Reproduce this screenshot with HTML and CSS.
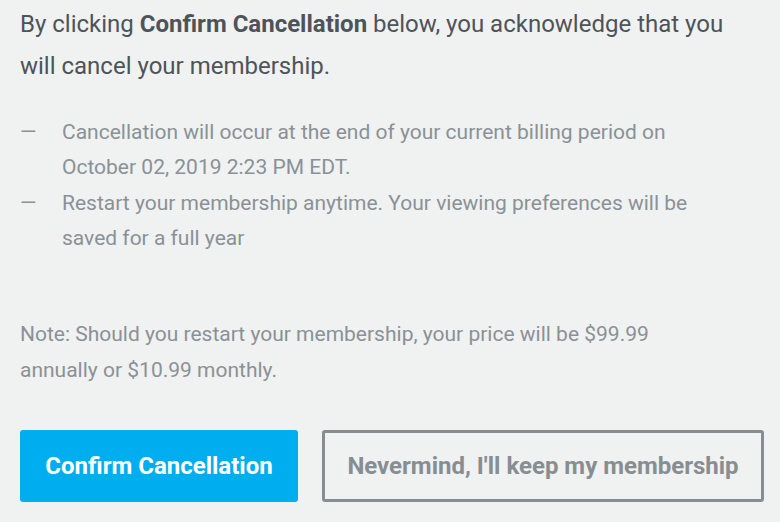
FILE: index.html
```html
<!DOCTYPE html>
<html>
<head>
<meta charset="utf-8">
<link rel="stylesheet" href="styles.css">
</head>
<body>
<div class="page">
  <p class="lead">By clicking <strong>Confirm Cancellation</strong> below, you acknowledge that you will cancel your membership.</p>
  <ul class="points">
    <li><span class="dash">—</span><span>Cancellation will occur at the end of your current billing period on October 02, 2019 2:23 PM EDT.</span></li>
    <li><span class="dash">—</span><span>Restart your membership anytime. Your viewing preferences will be saved for a full year</span></li>
  </ul>
  <p class="note">Note: Should you restart your membership, your price will be $99.99 annually or $10.99 monthly.</p>
  <div class="actions">
    <button class="btn btn-primary">Confirm Cancellation</button>
    <button class="btn btn-secondary">Nevermind, I'll keep my membership</button>
  </div>
</div>
</body>
</html>
```
FILE: styles.css
```css
html, body {
  margin: 0;
  padding: 0;
  background: #f0f1f1;
}
body {
  font-family: Roboto, "Noto Sans", sans-serif;
}
.page {
  padding: 3px 16px 0 20px;
}
.lead {
  margin: 0;
  font-size: 24px;
  line-height: 42px;
  color: #4d5459;
}
.lead strong {
  font-weight: 700;
}
.points {
  list-style: none;
  margin: 28px 0 0 0;
  padding: 0;
}
.points li {
  display: flex;
  font-size: 21px;
  line-height: 35.3px;
  color: #8a9196;
  padding-right: 60px;
}
.dash {
  flex: 0 0 42px;
}
.note {
  margin: 60px 0 0 0;
  font-size: 21px;
  line-height: 36px;
  color: #8a9196;
  padding-right: 80px;
}
.actions {
  display: flex;
  gap: 24px;
  margin-top: 42px;
}
.btn {
  font-family: Roboto, "Noto Sans", sans-serif;
  font-weight: 700;
  font-size: 24px;
  height: 72px;
  border-radius: 3px;
  cursor: pointer;
  flex-shrink: 0;
  padding: 0;
}
.btn-primary {
  width: 278px;
  background: #00aeef;
  color: #ffffff;
  border: none;
}
.btn-secondary {
  width: 442px;
  background: transparent;
  color: #868e92;
  border: 3px solid #868e92;
}
```
